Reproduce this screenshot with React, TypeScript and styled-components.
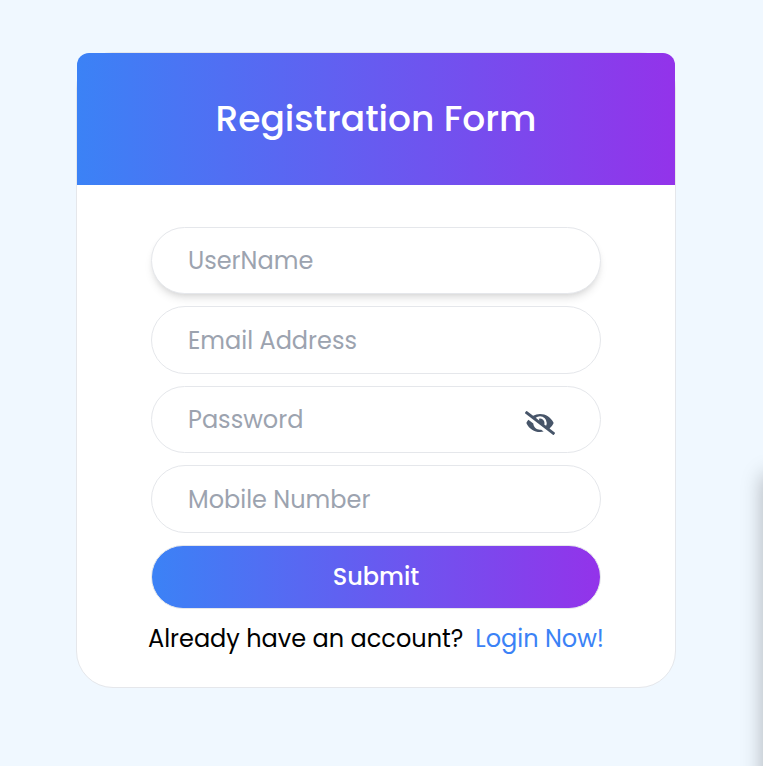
import React from "react";
import styled, { createGlobalStyle } from "styled-components";
import { FaEyeSlash } from "react-icons/fa";

const GlobalStyle = createGlobalStyle`
  * { box-sizing: border-box; }
  body {
    margin: 0;
    background: #f0f8ff;
    font-family: Poppins, Inter, "Open Sans", sans-serif;
  }
`;

const Page = styled.main`
  position: relative;
  width: 100%;
  height: 766px;
  padding: 52px 0 0 76px;
  overflow: hidden;
`;

const SidePanel = styled.div`
  position: absolute;
  left: 100%;
  top: 475px;
  width: 300px;
  height: 500px;
  box-shadow: 0 0 20px rgba(0, 0, 0, 0.28);
`;

const Card = styled.section`
  width: 600px;
  height: 636px;
  border: 1px solid #e5e7eb;
  border-radius: 37px;
  background: #fff;
`;

const Header = styled.header`
  display: flex;
  align-items: center;
  justify-content: center;
  height: 132px;
  border-radius: 12px 12px 0 0;
  background: linear-gradient(to right, #3b82f6, #9333ea);
`;

const Title = styled.h1`
  margin: 0;
  color: #fff;
  font-size: 36px;
  font-weight: 500;
  line-height: 50px;
  white-space: nowrap;
`;

const Form = styled.form`
  display: flex;
  flex-direction: column;
  align-items: center;
  gap: 12.25px;
  padding-top: 41.9px;
`;

const Field = styled.div<{ $raised?: boolean }>`
  display: flex;
  align-items: center;
  width: 450px;
  height: 67.25px;
  padding: 1px 45px 0 36px;
  border: 1px solid #e5e7eb;
  border-radius: 34px;
  background: #fff;
  box-shadow: ${(p) =>
    p.$raised
      ? "0 6px 9px -1.5px rgba(0,0,0,.1), 0 3px 6px -3px rgba(0,0,0,.1)"
      : "none"};
`;

const Input = styled.input`
  flex: 1;
  min-width: 0;
  padding: 0;
  border: 0;
  outline: 0;
  background: transparent;
  font: inherit;
  font-size: 24px;
  line-height: 36px;
  &::placeholder { color: #9ca3af; opacity: 1; }
`;

const Eye = styled(FaEyeSlash)`
  flex: none;
  color: #475569;
  margin-top: 5px;
`;

const Submit = styled.button`
  width: 450px;
  height: 64px;
  padding: 0;
  border: 1px solid #e5e7eb;
  border-radius: 32px;
  background: linear-gradient(to right, #3b82f6, #9333ea);
  color: #fff;
  font: inherit;
  font-size: 24px;
  font-weight: 500;
`;

const Footer = styled.p`
  display: flex;
  justify-content: center;
  gap: 12px;
  margin: 0;
  color: #000;
  font-size: 24px;
  line-height: 36px;
  white-space: nowrap;
`;

const Login = styled.a`
  color: #3b82f6;
  text-decoration: none;
`;

export default function App() {
  return (
    <Page>
      <GlobalStyle />
      <Card>
        <Header>
          <Title>Registration Form</Title>
        </Header>
        <Form onSubmit={(e) => e.preventDefault()}>
          <Field $raised>
            <Input placeholder="UserName" />
          </Field>
          <Field>
            <Input type="email" placeholder="Email Address" />
          </Field>
          <Field>
            <Input type="password" placeholder="Password" />
            <Eye size={30} />
          </Field>
          <Field>
            <Input type="tel" placeholder="Mobile Number" />
          </Field>
          <Submit type="submit">Submit</Submit>
          <Footer>
            <span>Already have an account?</span>
            <Login>Login Now!</Login>
          </Footer>
        </Form>
      </Card>
      <SidePanel />
    </Page>
  );
}
